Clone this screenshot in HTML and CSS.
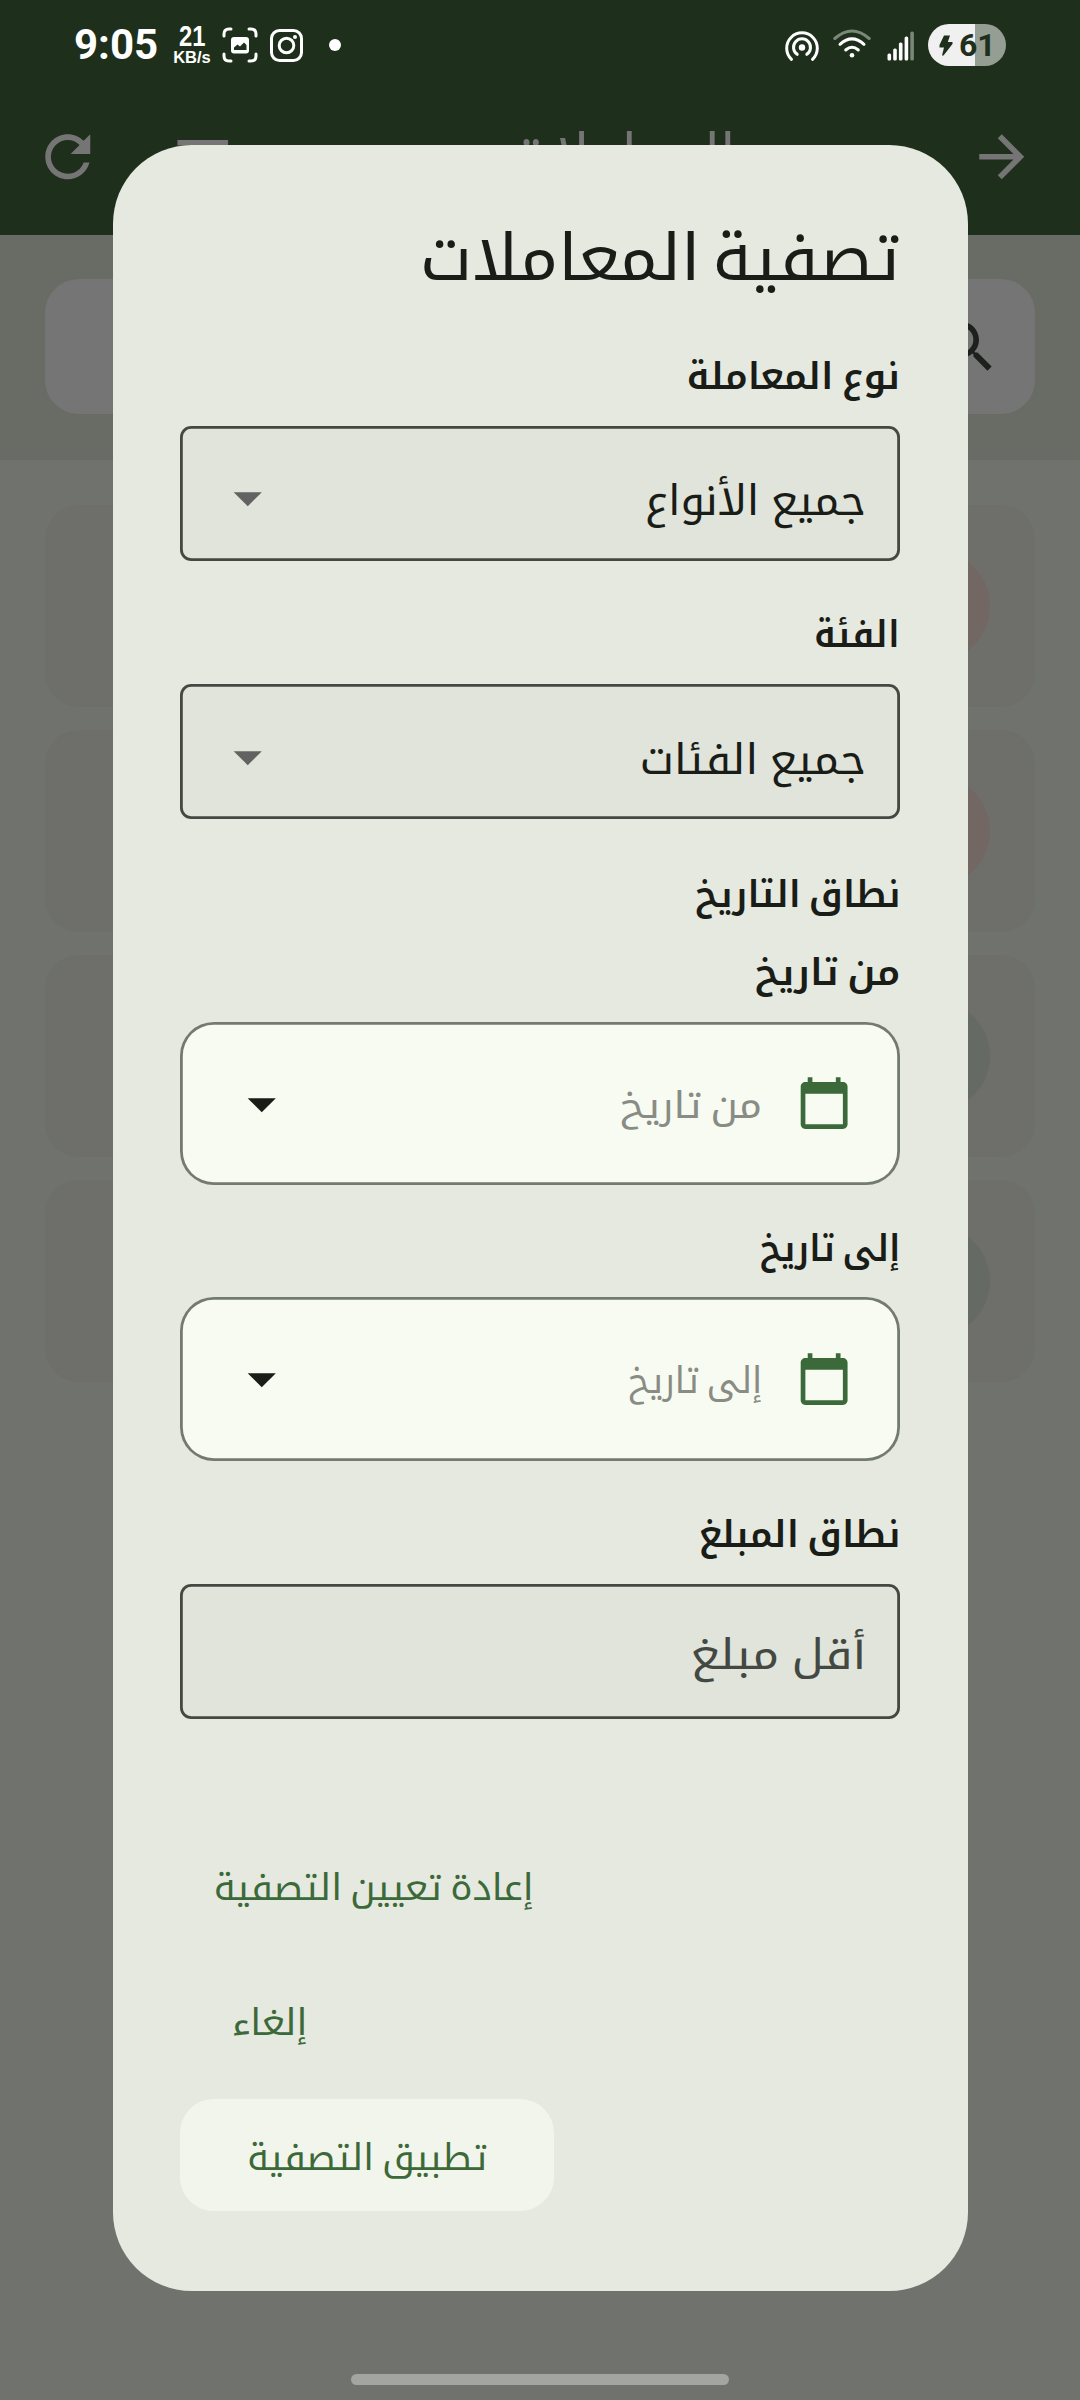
FILE: index.html
```html
<!DOCTYPE html>
<html lang="ar" dir="rtl">
<head>
<meta charset="utf-8">
<title>تصفية المعاملات</title>
<link rel="stylesheet" href="styles.css">
</head>
<body>
<div class="app">
  <header class="top">
    <div class="status" dir="ltr">
      <div class="status-left">
        <span class="clock">9:05</span>
        <span class="speed"><b class="speed-value">21</b><b class="speed-unit">KB/s</b></span>
        <svg class="scan" viewBox="0 0 36 36" fill="none" stroke="#fff" stroke-width="3" stroke-linecap="round">
          <path d="M2 9V7Q2 2 7 2H9M27 2H29Q34 2 34 7V9M34 27V29Q34 34 29 34H27M9 34H7Q2 34 2 29V27"/>
          <rect x="9" y="10" width="18" height="16.500" rx="3" fill="#fff" stroke="none"/>
          <path d="M12 23V20.500L15.500 17.500L18 19.500L22 15.500L24.500 18V23Z" fill="#1e301b" stroke="none"/>
        </svg>
        <svg class="insta" viewBox="0 0 33 33" fill="none" stroke="#fff" stroke-width="3">
          <rect x="1.500" y="1.500" width="30" height="30" rx="8"/>
          <circle cx="16.500" cy="16.500" r="7.300"/>
          <circle cx="25" cy="8" r="2" fill="#fff" stroke="none"/>
        </svg>
        <span class="more-dot"></span>
      </div>
      <div class="status-right">
        <svg class="hotspot" viewBox="0 0 34 32" fill="none" stroke="#fff" stroke-width="3" stroke-linecap="round">
          <path d="M6.500 29.300A15.300 15.300 0 1 1 27.500 29.300"/>
          <path d="M12.200 24.300A8.500 8.500 0 1 1 21.800 24.300"/>
          <circle cx="17" cy="17.500" r="3.200" fill="#fff" stroke="none"/>
        </svg>
        <svg class="wifi" viewBox="0 0 38 30" fill="none" stroke="#fff" stroke-width="3" stroke-linecap="round">
          <path d="M1.800 9.500Q19 -5.500 36.200 9.500" stroke="#7b8779"/>
          <path d="M7 15.300Q19 4.500 31 15.300"/>
          <path d="M12.700 21Q19 15.500 25.300 21"/>
          <circle cx="19" cy="26.300" r="2.300" fill="#fff" stroke="none"/>
        </svg>
        <svg class="signal" viewBox="0 0 28 30" fill="#fff">
          <rect x="0.500" y="22.500" width="3.600" height="7" rx="1.500"/>
          <rect x="6.200" y="17.500" width="3.600" height="12" rx="1.500"/>
          <rect x="11.900" y="11.500" width="3.600" height="18" rx="1.500"/>
          <rect x="17.600" y="5.500" width="3.600" height="24" rx="1.500"/>
          <rect x="23.300" y="0.500" width="3.600" height="29" rx="1.500" fill="#7b8779"/>
        </svg>
        <span class="battery">
          <svg class="bolt" viewBox="0 0 14 21" fill="#1e301b"><path d="M5 0.500H11L8.800 7H13.500V9L4.500 20.500H3L5 12.500H0.500V10Z"/></svg>
          <span>61</span>
        </span>
      </div>
    </div>
    <div class="appbar">
      <svg class="icon back" viewBox="0 0 24 24" fill="#757575"><path d="M12 4l-1.410 1.410L16.170 11H4v2h12.170l-5.580 5.590L12 20l8-8z"/></svg>
      <h1 class="app-title"><span>المعاملات</span></h1>
      <svg class="icon" viewBox="0 0 24 24" fill="#757575"><path d="M10 18h4v-2h-4v2zM3 6v2h18V6H3zm3 7h12v-2H6v2z"/></svg>
      <svg class="icon refresh" viewBox="0 0 24 24" fill="#757575"><path d="M17.650 6.350C16.200 4.900 14.210 4 12 4c-4.420 0-7.990 3.580-7.990 8s3.570 8 7.990 8c3.730 0 6.840-2.550 7.730-6h-2.080c-.82 2.330-3.040 4-5.650 4-3.310 0-6-2.690-6-6s2.690-6 6-6c1.660 0 3.140.690 4.220 1.780L13 11h7V4l-2.350 2.350z"/></svg>
    </div>
  </header>
  <section class="search-area">
    <div class="search-box">
      <svg class="icon" viewBox="0 0 24 24" fill="#1e201d"><path d="M15.500 14h-.79l-.28-.27C15.410 12.590 16 11.110 16 9.500 16 5.910 13.090 3 9.500 3S3 5.910 3 9.500 5.910 16 9.500 16c1.610 0 3.090-.59 4.230-1.570l.27.280v.79l5 4.990L20.490 19l-4.990-5zm-6 0C7.010 14 5 11.990 5 9.500S7.010 5 9.500 5 14 7.010 14 9.500 11.990 14 9.500 14z"/></svg>
    </div>
  </section>
  <main class="list">
    <article class="row"><span class="avatar expense"></span></article>
    <article class="row"><span class="avatar expense"></span></article>
    <article class="row"><span class="avatar income"></span></article>
    <article class="row"><span class="avatar income"></span></article>
  </main>
  <div class="home-bar"></div>
</div>

<div class="dialog" role="dialog">
  <h2 class="dialog-title"><span>تصفية المعاملات</span></h2>

  <h3 class="label type"><span>نوع المعاملة</span></h3>
  <div class="field">
    <span class="value v-type">جميع الأنواع</span>
    <svg class="icon drop" viewBox="0 0 24 24"><path d="M7 10l5 5 5-5z"/></svg>
  </div>

  <h3 class="label category"><span>الفئة</span></h3>
  <div class="field">
    <span class="value v-category">جميع الفئات</span>
    <svg class="icon drop" viewBox="0 0 24 24"><path d="M7 10l5 5 5-5z"/></svg>
  </div>

  <h3 class="label range"><span>نطاق التاريخ</span></h3>
  <h4 class="label from"><span>من تاريخ</span></h4>
  <div class="date">
    <svg class="calendar" viewBox="0 0 24 24"><path d="M20 3h-1V1h-2v2H7V1H5v2H4c-1.100 0-2 .9-2 2v16c0 1.100.9 2 2 2h16c1.100 0 2-.9 2-2V5c0-1.100-.9-2-2-2zm0 18H4V8h16v13z"/></svg>
    <span class="hint h-from">من تاريخ</span>
    <svg class="icon" viewBox="0 0 24 24"><path d="M7 10l5 5 5-5z"/></svg>
  </div>

  <h4 class="label to"><span>إلى تاريخ</span></h4>
  <div class="date">
    <svg class="calendar" viewBox="0 0 24 24"><path d="M20 3h-1V1h-2v2H7V1H5v2H4c-1.100 0-2 .9-2 2v16c0 1.100.9 2 2 2h16c1.100 0 2-.9 2-2V5c0-1.100-.9-2-2-2zm0 18H4V8h16v13z"/></svg>
    <span class="hint h-to">إلى تاريخ</span>
    <svg class="icon" viewBox="0 0 24 24"><path d="M7 10l5 5 5-5z"/></svg>
  </div>

  <h3 class="label amount"><span>نطاق المبلغ</span></h3>
  <div class="field">
    <span class="value v-amount">أقل مبلغ</span>
  </div>

  <div class="actions">
    <button class="btn reset"><span>إعادة تعيين التصفية</span></button>
    <button class="btn cancel"><span>إلغاء</span></button>
    <button class="btn apply"><span>تطبيق التصفية</span></button>
  </div>
</div>
</body>
</html>
```
FILE: styles.css
```css
* { box-sizing: border-box; margin: 0; padding: 0; }

body {
  position: relative;
  width: 1080px;
  height: 2400px;
  overflow: hidden;
  background: #70726d;
  font-family: "Noto Kufi Arabic", "DejaVu Sans", sans-serif;
  color: #1a1d17;
}

span, svg { display: block; flex: none; }
.icon { width: 67.5px; height: 67.5px; }

/* Dimmed screen behind the dialog */
.app { display: flex; flex-direction: column; height: 2400px; }
.top { height: 235px; background: #1e301b; }

.status {
  display: flex;
  justify-content: space-between;
  height: 90px;
  padding: 0 74px 0 74px;
  color: #fff;
}
.status-left, .status-right { display: flex; align-items: center; }
.clock { width: 84px; font: 700 42px/90px Roboto, sans-serif; }
.speed {
  display: flex;
  flex-direction: column;
  align-items: center;
  width: 40px;
  margin-left: 14px;
  font-family: "Liberation Sans", Arial, sans-serif;
}
.speed-value { font-size: 29px; line-height: 25px; transform: scaleX(.82); }
.speed-unit { font-size: 16.5px; line-height: 17px; }
.scan { width: 36px; height: 36px; margin-left: 10px; }
.insta { width: 33px; height: 33px; margin-left: 12px; }
.more-dot { width: 12px; height: 12px; margin-left: 26px; border-radius: 50%; background: #fff; }
.hotspot { width: 34px; height: 32px; margin-top: 2px; }
.wifi { width: 38px; height: 30px; margin-left: 14px; margin-top: -2px; }
.signal { width: 28px; height: 30px; margin-left: 16px; margin-top: 1px; }
.battery {
  display: flex;
  align-items: center;
  gap: 6px;
  width: 78px;
  height: 42px;
  margin-left: 13px;
  padding-left: 11px;
  border-radius: 21px;
  background: linear-gradient(90deg, #f0f0f0 47px, #949e92 47px);
  color: #1e301b;
  font: 700 32px/42px Roboto, sans-serif;
}
.bolt { width: 14px; height: 21px; }

.appbar { display: flex; align-items: center; height: 132.5px; padding: 0 45px 0 33.75px; }
.app-title {
  flex: 1;
  padding-right: 232px;
  font-size: 58.5px;
  font-weight: 400;
  line-height: 80px;
  color: #757575;
}
.app-title span { width: max-content; transform: scaleX(.92); transform-origin: right; }
.refresh { margin-right: 67.5px; }

.search-area { height: 225px; padding: 44px 45px 0; background: #696b65; }
.search-box {
  display: flex;
  align-items: center;
  height: 135px;
  padding-right: 34px;
  border-radius: 33.75px;
  background: #757575;
}

.list { display: flex; flex-direction: column; gap: 22.5px; padding: 44.5px 45px 0; }
.row {
  display: flex;
  align-items: center;
  height: 202.5px;
  padding-right: 45px;
  border-radius: 33.75px;
  background: #6e6f6a;
}
.avatar { width: 112.5px; height: 112.5px; border-radius: 50%; }
.expense { background: #736763; }
.income { background: #656b64; }
.home-bar {
  width: 378px;
  height: 11px;
  margin: auto auto 15px;
  border-radius: 5.5px;
  background: #a3a5a0;
}

/* Filter dialog */
.dialog {
  position: absolute;
  top: 144.5px;
  left: 112.5px;
  width: 855px;
  height: 2146px;
  padding: 67.5px;
  border-radius: 78.75px;
  background: #e6e9e0;
}
.dialog-title { font-size: 64px; font-weight: 400; line-height: 94px; word-spacing: -.16em; }
.dialog-title span, .label span, .value, .hint {
  width: max-content;
  transform-origin: right;
}
.dialog-title span { transform: scaleX(1.048); }

.label { margin-bottom: 24px; font-size: 37px; font-weight: 600; line-height: 50px; word-spacing: -.12em; }
.type { margin-top: 45.5px; }
.type span { transform: scaleX(1.022); }
.category { margin-top: 49.5px; }
.category span { transform: scaleX(.965); }
.range { margin-top: 50.5px; margin-bottom: 28px; }
.range span { transform: scaleX(.99); }
.from { margin-bottom: 24px; }
.from span { transform: scaleX(1.045); }
.to { margin-top: 38.5px; margin-bottom: 23.5px; }
.to span { transform: scaleX(.935); }
.amount { margin-top: 49.5px; margin-bottom: 23.5px; }
.amount span { transform: scaleX(1.008); }

.field, .date { display: flex; align-items: center; justify-content: space-between; }
.field {
  height: 135px;
  padding: 0 33.75px;
  border-radius: 11.25px;
  background: #e1e4db;
  box-shadow: inset 0 0 0 2.8px #434942;
}
.value { padding-top: 16px; font-size: 42px; line-height: 60px; word-spacing: -.08em; }
.v-type { transform: scaleX(1.034); }
.v-category { transform: scaleX(1.047); }
.v-amount { padding-top: 7px; color: #434942; transform: scaleX(1.133); }
.drop { margin-top: 10px; fill: #626262; }

.date {
  height: 163.5px;
  padding: 0 48px;
  border-radius: 33.75px;
  background: #f8fbf2;
  box-shadow: inset 0 0 0 2.8px #737b70;
}
.calendar { width: 56.25px; height: 56.25px; fill: #3c6939; }
.hint {
  margin: 5px 33.75px 0 auto;
  font-size: 37px;
  line-height: 50px;
  color: #898c85;
  word-spacing: -.12em;
}
.h-from { transform: scaleX(1.1); }
.h-to { transform: scaleX(.955); }
.date .icon { margin-right: auto; fill: #1a1d17; }

.actions {
  display: flex;
  flex-direction: column;
  align-items: flex-end;
  gap: 22.5px;
  margin-top: 110px;
}
.btn {
  display: flex;
  align-items: center;
  justify-content: center;
  height: 112.5px;
  padding-top: 6px;
  border: 0;
  border-radius: 33.75px;
  background: none;
  font: 400 36.5px/50px "Noto Kufi Arabic", "DejaVu Sans", sans-serif;
  color: #3c6939;
  word-spacing: -.12em;
}
.reset { width: 388px; }
.reset span { transform: scaleX(1.028); }
.cancel { width: 180px; }
.cancel span { transform: scaleX(1.036); }
.apply { width: 374px; background: #f2f5eb; }
.apply span { transform: scaleX(1.015); }
```
